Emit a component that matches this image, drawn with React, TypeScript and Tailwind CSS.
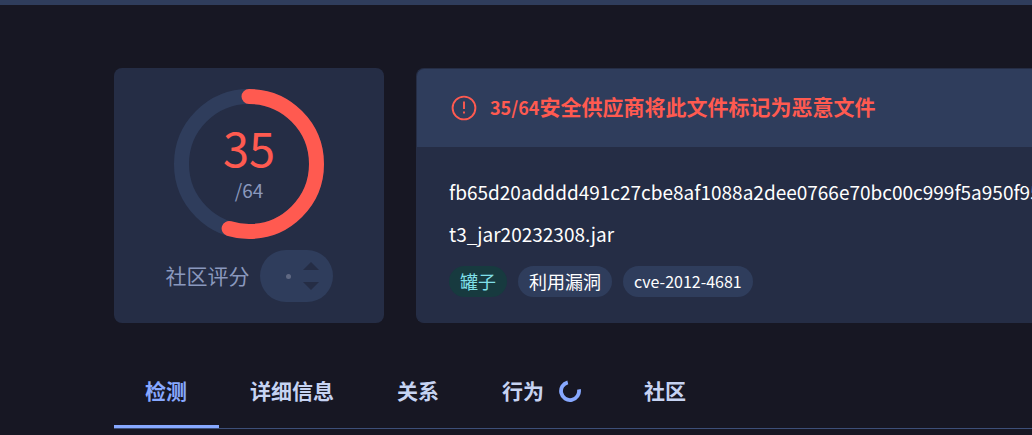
import React from 'react';

const detections = 35;
const engines = 64;

const tags = [
  { label: '罐子', style: 'bg-[#173a3f] text-[#7fdfe8] text-lg' },
  { label: '利用漏洞', style: 'bg-[#2f3d5c] text-white text-lg' },
  { label: 'cve-2012-4681', style: 'bg-[#2f3d5c] text-white text-base' },
];

const tabs = [
  { id: 'detection', label: '检测', active: true },
  { id: 'details', label: '详细信息' },
  { id: 'relations', label: '关系' },
  { id: 'behavior', label: '行为', loading: true },
  { id: 'community', label: '社区' },
];

function ScoreRing() {
  const radius = 67.5;
  const length = 2 * Math.PI * radius;
  return (
    <div className="grid size-[150px] place-items-center">
      <svg viewBox="0 0 150 150" className="col-start-1 row-start-1 size-full" fill="none" strokeWidth="15">
        <circle cx="75" cy="75" r={radius} stroke="#2f3d5c" />
        <circle
          cx="75"
          cy="75"
          r={radius}
          stroke="#ff5a50"
          strokeLinecap="round"
          strokeDasharray={`${(length * detections) / engines} ${length}`}
          transform="rotate(-90 75 75)"
        />
      </svg>
      <div className="col-start-1 row-start-1 flex flex-col items-center pb-1">
        <div className="text-[47px] leading-[56px] text-[#ff5a50]">{detections}</div>
        <div className="text-[19px] leading-[30px] text-[#8a98bd]">/{engines}</div>
      </div>
    </div>
  );
}

function CommunityScore() {
  return (
    <div className="flex items-center gap-2.5 text-[21px] text-[#8a98bd]">
      <span>社区评分</span>
      <div className="flex h-[52px] w-[73px] items-center justify-end gap-3 rounded-full bg-[#2f3d5c] pr-3.5">
        <span className="size-[5px] rounded-full bg-[#606983]"></span>
        <div className="flex flex-col gap-3">
          <button aria-label="赞成">
            <svg viewBox="0 0 16 8" className="block h-2 w-4 fill-[#252d45]"><path d="M0 8 8 0l8 8z" /></svg>
          </button>
          <button aria-label="反对">
            <svg viewBox="0 0 16 8" className="block h-2 w-4 fill-[#252d45]"><path d="M0 0h16L8 8z" /></svg>
          </button>
        </div>
      </div>
    </div>
  );
}

export default function App() {
  return (
    <div className="min-h-screen overflow-x-hidden border-t-[5px] border-[#2f3d5c] bg-[#171723] font-['Noto_Sans_CJK_SC',sans-serif]">
      <main className="pt-[63px] pl-[114px]">
        <div className="flex gap-8">
          <section className="flex w-[270px] shrink-0 flex-col items-center gap-[11px] rounded-lg bg-[#252d45] pt-[21px] pb-[21px]">
            <ScoreRing />
            <CommunityScore />
          </section>

          <section className="min-w-0 flex-1 overflow-hidden rounded-l-lg border border-r-0 border-[#252d45] bg-[#252d45]">
            <div className="flex h-[78px] items-center gap-[13px] bg-[#2f3d5c] pl-[34px] text-[#ff5a50]">
              <svg viewBox="0 0 26 26" className="size-[26px] shrink-0" fill="none" stroke="currentColor" strokeWidth="1.9">
                <circle cx="13" cy="13" r="11.4" />
                <path d="M13 6.5V14M13 16.5v2" />
              </svg>
              <h1 className="pb-1 text-[21px] leading-7 font-bold whitespace-nowrap">
                <span className="text-lg">{detections}/{engines}</span>安全供应商将此文件标记为恶意文件
              </h1>
            </div>
            <div className="flex flex-col gap-3 pt-[30px] pl-8 text-white">
              <div className="text-[19px] leading-[30px] whitespace-nowrap">
                fb65d20adddd491c27cbe8af1088a2dee0766e70bc00c999f5a950f95
              </div>
              <div className="text-[19px] leading-[30px]">t3_jar20232308.jar</div>
              <div className="mt-[5px] flex gap-[11px]">
                {tags.map((tag) => (
                  <a key={tag.label} href="#" className={`flex h-[31px] items-center rounded-full px-[11px] pb-0.5 ${tag.style}`}>
                    {tag.label}
                  </a>
                ))}
              </div>
            </div>
          </section>
        </div>

        <nav className="mt-8 flex border-b border-[#3d4f78]">
          {tabs.map((tab) => (
            <button
              key={tab.id}
              className={`flex h-[73px] items-center gap-[15px] border-b-[3px] pt-0.5 pr-8 pl-[31px] text-[21px] font-bold whitespace-nowrap ${
                tab.active ? 'border-[#87a8ff] text-[#87a8ff]' : 'border-transparent text-[#c6d3f2]'
              }`}
            >
              {tab.label}
              {tab.loading && (
                <svg viewBox="0 0 22 22" className="size-[22px]" fill="none" stroke="#87a8ff" strokeWidth="3.8">
                  <path d="M8.8 2.3A9 9 0 1 0 19.9 9.4" />
                </svg>
              )}
            </button>
          ))}
        </nav>
      </main>
    </div>
  );
}
